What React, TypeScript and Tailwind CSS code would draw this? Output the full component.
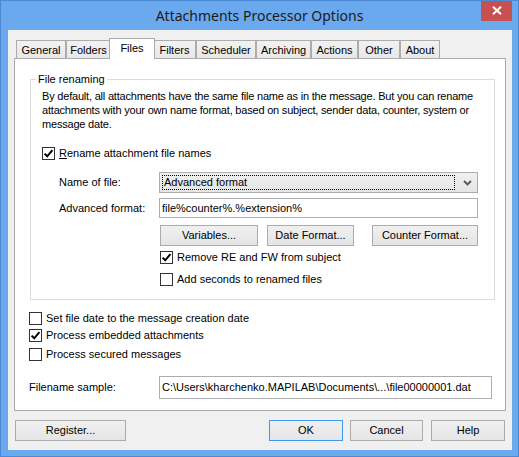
import React from "react";

const Tick = () => (
  <svg width="11" height="11" viewBox="0 0 11 11" className="block">
    <path d="M1.6 5.6 L4.2 8.3 L9.4 2.2" fill="none" stroke="#000" strokeWidth="2" />
  </svg>
);

function CheckBox({
  checked,
  children,
  className,
}: {
  checked?: boolean;
  children: React.ReactNode;
  className: string;
}) {
  return (
    <div className={"flex items-center gap-[4px] h-[13px] " + className}>
      <span className="w-[13px] h-[13px] border border-[#333333] bg-white flex items-center justify-center shrink-0">
        {checked && <Tick />}
      </span>
      <span className="leading-[13px] whitespace-nowrap">{children}</span>
    </div>
  );
}

function Button({
  className,
  children,
  primary,
}: {
  className: string;
  children: React.ReactNode;
  primary?: boolean;
}) {
  return (
    <div
      className={
        "flex items-center justify-center border bg-gradient-to-b from-[#f0f0f0] to-[#e5e5e5] " +
        (primary ? "border-[#3c9bf0] " : "border-[#acacac] ") +
        className
      }
    >
      {children}
    </div>
  );
}

const tabs = [
  { label: "General", w: "w-[50px]" },
  { label: "Folders", w: "w-[45px]" },
  { label: "Files", w: "w-[46px]", active: true },
  { label: "Filters", w: "w-[43px]" },
  { label: "Scheduler", w: "w-[60px]" },
  { label: "Archiving", w: "w-[55px]" },
  { label: "Actions", w: "w-[47px]" },
  { label: "Other", w: "w-[42px]" },
  { label: "About", w: "w-[40px]" },
];

export default function App() {
  return (
    <div className="w-[519px] h-[457px] bg-[#6aa9ee] border border-[#4b8bd4] flex flex-col font-['Liberation_Sans',Arial,sans-serif] text-[11px] text-black overflow-hidden">
      {/* caption bar */}
      <div className="h-[29px] flex shrink-0">
        <div className="flex-1 basis-0" />
        <div className="font-['Noto_Sans',sans-serif] text-[14px] leading-[30px] text-[#1b1b1b] whitespace-nowrap">
          Attachments Processor Options
        </div>
        <div className="flex-1 basis-0 flex justify-end items-start">
          <div className="w-[31px] h-[21px] -mt-px mr-[6px] bg-[#c75050] flex items-center justify-center">
            <svg width="10" height="9" viewBox="0 0 10 9">
              <path d="M1 0.8 L9 8.2 M9 0.8 L1 8.2" stroke="#fff" strokeWidth="2" />
            </svg>
          </div>
        </div>
      </div>

      {/* client area */}
      <div className="ml-[7px] mr-[6px] h-[420px] bg-[#f0f0f0] flex flex-col pt-[8px] px-[6px]">
        {/* tab strip */}
        <div className="flex items-end h-[20px] ml-[2px] relative z-10">
          {tabs.map((t) =>
            t.active ? (
              <div
                key={t.label}
                className={
                  "relative z-10 -mx-[2px] h-[21px] -mb-px bg-white border border-b-0 border-[#acacac] flex justify-center pt-[3px] leading-[13px] " +
                  t.w
                }
              >
                {t.label}
              </div>
            ) : (
              <div
                key={t.label}
                className={
                  "h-[18px] bg-gradient-to-b from-[#f2f2f2] to-[#e8e8e8] border border-b-0 border-[#acacac] flex justify-center pt-[3px] leading-[13px] " +
                  t.w
                }
              >
                {t.label}
              </div>
            )
          )}
        </div>

        {/* tab page */}
        <div className="h-[353px] bg-white border border-[#acacac] flex flex-col pt-[13px]">
          <fieldset className="border border-[#dcdcdc] ml-[15px] mr-[10px] pb-[13px]">
            <legend className="ml-[5px] px-[2px] leading-[14px]">File renaming</legend>
            <div className="pl-[11px]">
              <p className="leading-[14px] pt-[3px] whitespace-nowrap tracking-[-0.2px]">
                By default, all attachments have the same file name as in the message. But you can rename
                <br />
                attachments with your own name format, based on subject, sender data, counter, system or
                <br />
                message date.
              </p>

              <CheckBox checked className="mt-[16px]">
                <span className="underline">R</span>ename attachment file names
              </CheckBox>

              <div className="flex items-center mt-[12px] ml-[17px]">
                <span className="w-[100px]">Name of file:</span>
                <div className="w-[319px] h-[21px] border border-[#acacac] bg-gradient-to-b from-[#f0f0f0] to-[#e5e5e5] flex">
                  <div className="flex-1 m-[2px] border border-dotted border-black flex items-center pl-[1px] leading-[13px]">
                    Advanced format
                  </div>
                  <div className="w-[20px] flex items-center justify-center">
                    <svg width="9" height="6" viewBox="0 0 9 6">
                      <path d="M1 1 L4.5 4.5 L8 1" fill="none" stroke="#555" strokeWidth="1.8" />
                    </svg>
                  </div>
                </div>
              </div>

              <div className="flex items-center mt-[5px] ml-[17px]">
                <span className="w-[100px]">Advanced format:</span>
                <div className="w-[319px] h-[20px] border border-[#abadb3] bg-white flex items-center pl-[2px]">
                  file%counter%.%extension%
                </div>
              </div>

              <div className="flex mt-[7px] ml-[118px]">
                <Button className="w-[98px] h-[21px]">Variables...</Button>
                <Button className="w-[87px] h-[21px] ml-[9px]">Date Format...</Button>
                <Button className="w-[106px] h-[21px] ml-[18px]">Counter Format...</Button>
              </div>

              <CheckBox checked className="mt-[5px] ml-[118px]">
                Remove RE and FW from subject
              </CheckBox>
              <CheckBox className="mt-[9px] ml-[118px]">Add seconds to renamed files</CheckBox>
            </div>
          </fieldset>

          <CheckBox className="mt-[12px] ml-[14px]">Set file date to the message creation date</CheckBox>
          <CheckBox checked className="mt-[4px] ml-[14px]">
            Process embedded attachments
          </CheckBox>
          <CheckBox className="mt-[6px] ml-[14px]">Process secured messages</CheckBox>

          <div className="flex items-center mt-[15px] ml-[14px]">
            <span className="w-[130px]">Filename sample:</span>
            <div className="w-[333px] h-[23px] border border-[#abadb3] bg-white flex items-center pl-[2px] whitespace-nowrap">
              C:\Users\kharchenko.MAPILAB\Documents\...\file00000001.dat
            </div>
          </div>
        </div>

        {/* dialog buttons */}
        <div className="flex mt-[9px] px-px">
          <Button className="w-[111px] h-[21px]">Register...</Button>
          <div className="flex-1" />
          <Button primary className="w-[74px] h-[21px]">
            OK
          </Button>
          <Button className="w-[73px] h-[21px] ml-[7px]">Cancel</Button>
          <Button className="w-[74px] h-[21px] ml-[8px]">Help</Button>
        </div>
      </div>
    </div>
  );
}
